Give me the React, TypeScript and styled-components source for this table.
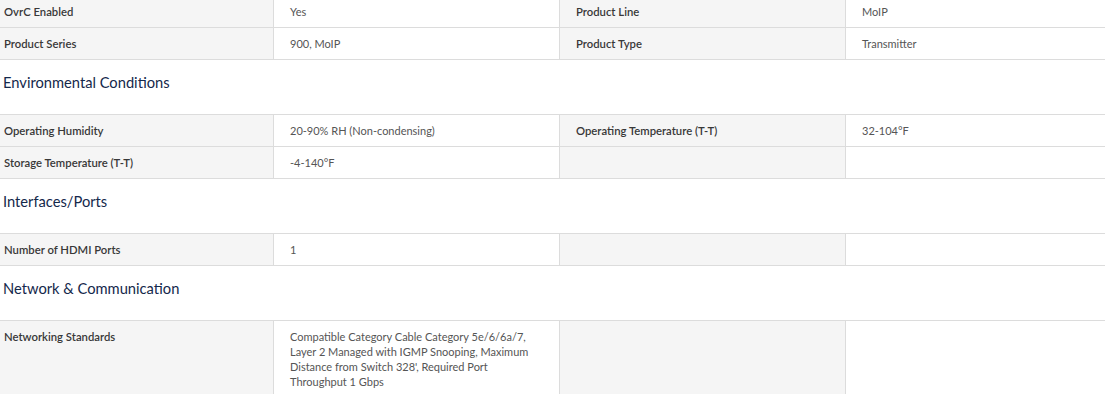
import React from 'react';
import styled, { createGlobalStyle } from 'styled-components';

const GlobalStyle = createGlobalStyle`
  html, body {
    margin: 0;
    padding: 0;
    background: #fff;
    overflow: hidden;
  }
  body {
    font-family: Lato, 'Open Sans', Arial, sans-serif;
  }
`;

const Page = styled.div`
  width: 1105px;
  height: 394px;
  overflow: hidden;
`;

const Section = styled.section<{ first?: boolean }>`
  margin-top: ${({ first }) => (first ? '-5px' : '0')};
`;

const Heading = styled.h3`
  margin: 12px 0 22px 3px;
  font-size: 14.7px;
  line-height: 20px;
  font-weight: 400;
  color: #14284b;
`;

const Table = styled.div`
  display: grid;
  grid-template-columns: 273px 286px 286px 1fr;
  border-top: 1px solid #dcdcdc;
`;

const Cell = styled.div<{ kind: 'label' | 'value'; first?: boolean }>`
  box-sizing: border-box;
  padding: 8px ${({ first }) => (first ? '4px' : '16px')};
  min-height: 32px;
  border-bottom: 1px solid #dcdcdc;
  border-left: ${({ first }) => (first ? 'none' : '1px solid #dcdcdc')};
  background: ${({ kind }) => (kind === 'label' ? '#f5f5f5' : '#fff')};
  color: ${({ kind }) => (kind === 'label' ? '#383838' : '#555')};
  font-size: ${({ kind }) => (kind === 'label' ? '11.3px' : '11px')};
  line-height: 15px;
  font-weight: ${({ kind }) => (kind === 'label' ? 600 : 400)};
`;

type Spec = [string, string];

interface Group {
  title?: string;
  rows: [Spec, Spec][];
}

const groups: Group[] = [
  {
    rows: [
      [
        ['OvrC Enabled', 'Yes'],
        ['Product Line', 'MoIP'],
      ],
      [
        ['Product Series', '900, MoIP'],
        ['Product Type', 'Transmitter'],
      ],
    ],
  },
  {
    title: 'Environmental Conditions',
    rows: [
      [
        ['Operating Humidity', '20-90% RH (Non-condensing)'],
        ['Operating Temperature (T-T)', '32-104°F'],
      ],
      [
        ['Storage Temperature (T-T)', '-4-140°F'],
        ['', ''],
      ],
    ],
  },
  {
    title: 'Interfaces/Ports',
    rows: [
      [
        ['Number of HDMI Ports', '1'],
        ['', ''],
      ],
    ],
  },
  {
    title: 'Network & Communication',
    rows: [
      [
        [
          'Networking Standards',
          "Compatible Category Cable Category 5e/6/6a/7, Layer 2 Managed with IGMP Snooping, Maximum Distance from Switch 328', Required Port Throughput 1 Gbps",
        ],
        ['', ''],
      ],
    ],
  },
];

const ValueText = styled.span`
  display: block;
  max-width: 250px;
`;

export default function App() {
  return (
    <Page>
      <GlobalStyle />
      {groups.map((group, gi) => (
        <Section key={gi} first={gi === 0}>
          {group.title && <Heading>{group.title}</Heading>}
          <Table>
            {group.rows.map(([left, right], ri) => (
              <React.Fragment key={ri}>
                <Cell kind="label" first>
                  {left[0]}
                </Cell>
                <Cell kind="value">
                  <ValueText>{left[1]}</ValueText>
                </Cell>
                <Cell kind="label">{right[0]}</Cell>
                <Cell kind="value">{right[1]}</Cell>
              </React.Fragment>
            ))}
          </Table>
        </Section>
      ))}
    </Page>
  );
}
